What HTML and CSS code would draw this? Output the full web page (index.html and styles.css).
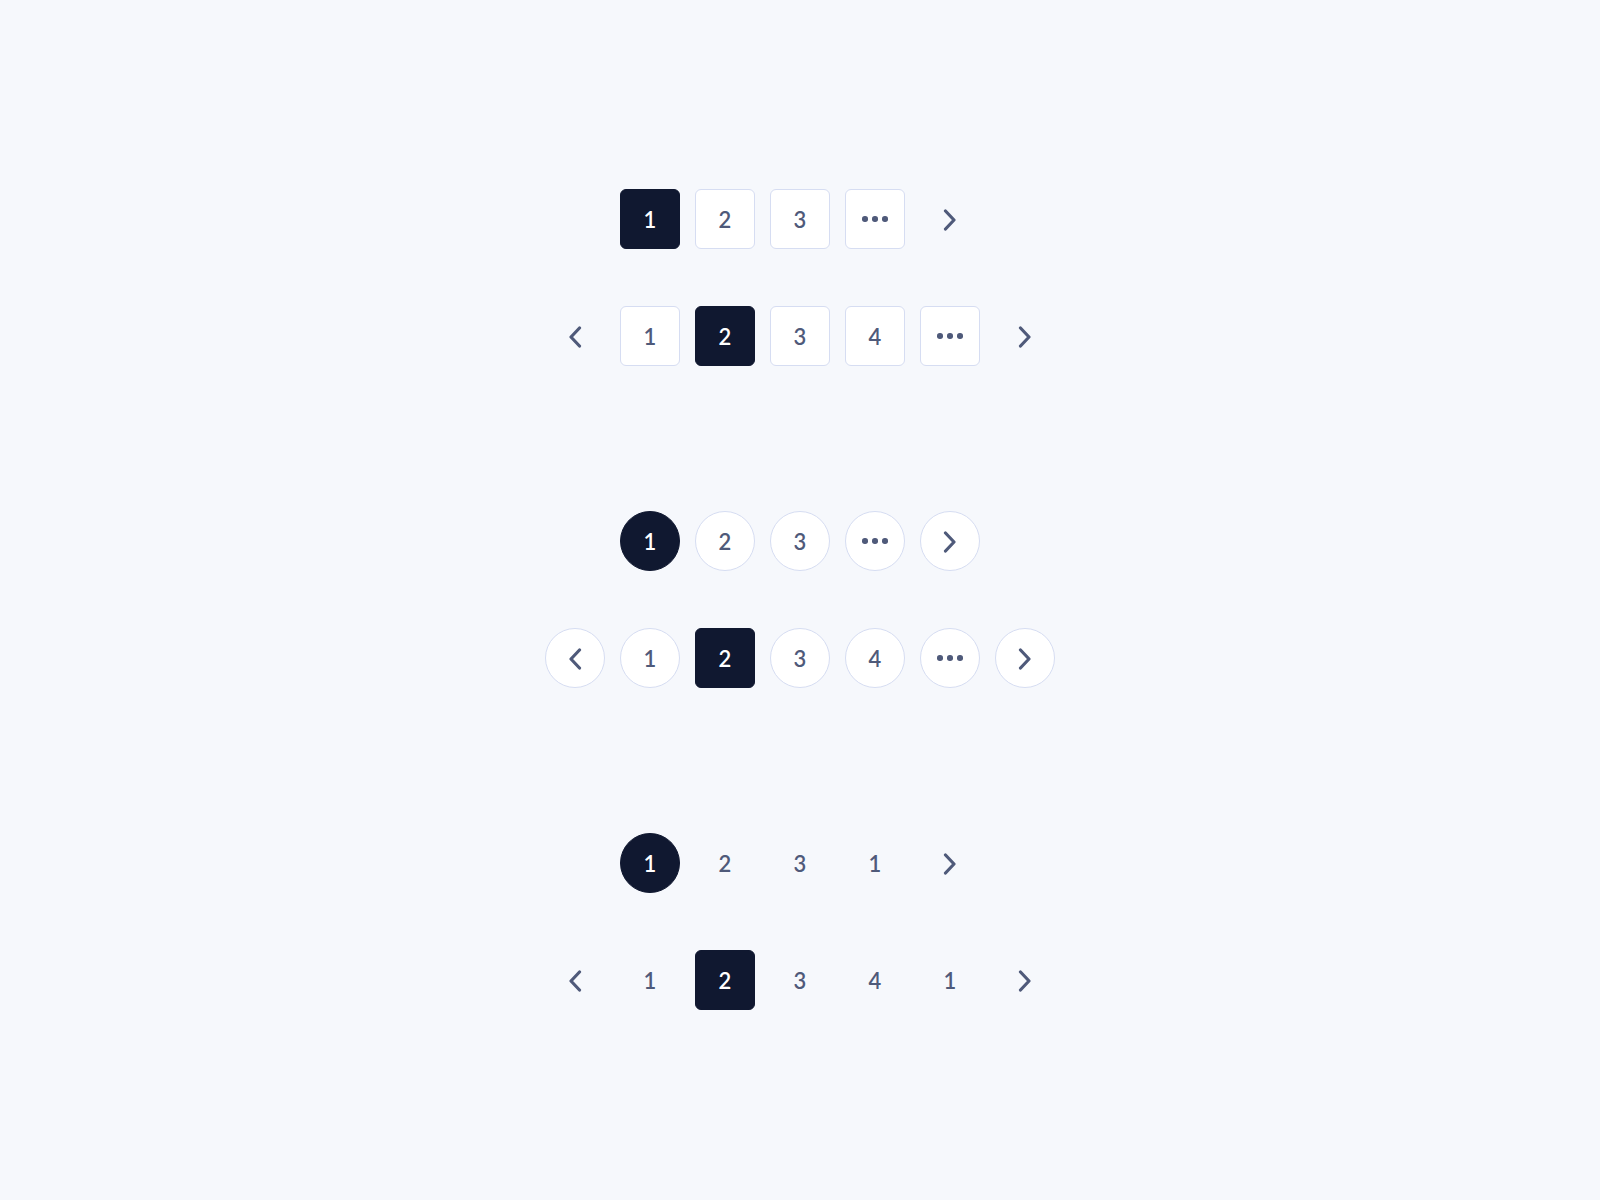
FILE: index.html
```html
<!DOCTYPE html>
<html lang="en">
<head>
<meta charset="utf-8">
<title>Pagination</title>
<link rel="stylesheet" href="styles.css">
</head>
<body>
<main class="page">
  <section class="group">
    <nav class="pager">
      <span class="item boxed active">1</span>
      <span class="item boxed">2</span>
      <span class="item boxed">3</span>
      <span class="item boxed"><span class="dots"><i></i><i></i><i></i></span></span>
      <span class="item"><svg class="chev" viewBox="0 0 14 22"><polyline points="2.5,2 11,11 2.5,20"/></svg></span>
    </nav>
    <nav class="pager">
      <span class="item"><svg class="chev" viewBox="0 0 14 22"><polyline points="11.5,2 3,11 11.5,20"/></svg></span>
      <span class="item boxed">1</span>
      <span class="item boxed active">2</span>
      <span class="item boxed">3</span>
      <span class="item boxed">4</span>
      <span class="item boxed"><span class="dots"><i></i><i></i><i></i></span></span>
      <span class="item"><svg class="chev" viewBox="0 0 14 22"><polyline points="2.5,2 11,11 2.5,20"/></svg></span>
    </nav>
  </section>

  <section class="group">
    <nav class="pager">
      <span class="item boxed round active">1</span>
      <span class="item boxed round">2</span>
      <span class="item boxed round">3</span>
      <span class="item boxed round"><span class="dots"><i></i><i></i><i></i></span></span>
      <span class="item boxed round"><svg class="chev" viewBox="0 0 14 22"><polyline points="2.5,2 11,11 2.5,20"/></svg></span>
    </nav>
    <nav class="pager">
      <span class="item boxed round"><svg class="chev" viewBox="0 0 14 22"><polyline points="11.5,2 3,11 11.5,20"/></svg></span>
      <span class="item boxed round">1</span>
      <span class="item boxed active">2</span>
      <span class="item boxed round">3</span>
      <span class="item boxed round">4</span>
      <span class="item boxed round"><span class="dots"><i></i><i></i><i></i></span></span>
      <span class="item boxed round"><svg class="chev" viewBox="0 0 14 22"><polyline points="2.5,2 11,11 2.5,20"/></svg></span>
    </nav>
  </section>

  <section class="group">
    <nav class="pager">
      <span class="item round active">1</span>
      <span class="item">2</span>
      <span class="item">3</span>
      <span class="item">1</span>
      <span class="item"><svg class="chev" viewBox="0 0 14 22"><polyline points="2.5,2 11,11 2.5,20"/></svg></span>
    </nav>
    <nav class="pager">
      <span class="item"><svg class="chev" viewBox="0 0 14 22"><polyline points="11.5,2 3,11 11.5,20"/></svg></span>
      <span class="item">1</span>
      <span class="item active">2</span>
      <span class="item">3</span>
      <span class="item">4</span>
      <span class="item">1</span>
      <span class="item"><svg class="chev" viewBox="0 0 14 22"><polyline points="2.5,2 11,11 2.5,20"/></svg></span>
    </nav>
  </section>
</main>
</body>
</html>
```

FILE: styles.css
```css
html, body {
  margin: 0;
  padding: 0;
}

body {
  background: #f6f8fc;
  font-family: Lato, "Open Sans", "Liberation Sans", sans-serif;
}

.page {
  box-sizing: border-box;
  height: 1200px;
  padding-bottom: 2px;
  display: flex;
  flex-direction: column;
  align-items: center;
  justify-content: center;
  gap: 145px;
}

.group {
  display: flex;
  flex-direction: column;
  align-items: center;
  gap: 57px;
}

.pager {
  display: flex;
  gap: 15px;
}

.item {
  box-sizing: border-box;
  width: 60px;
  height: 60px;
  display: flex;
  align-items: center;
  justify-content: center;
  padding-top: 3px;
  font-size: 22px;
  font-weight: 600;
  color: #4f5a7a;
  border-radius: 6px;
  line-height: 1;
}

.item.boxed {
  background: #ffffff;
  border: 1px solid #d6ddf2;
}

.item.round {
  border-radius: 50%;
}

.item.active {
  background: #101830;
  border: 1px solid #101830;
  color: #ffffff;
}

.chev {
  width: 14px;
  height: 22px;
  margin-top: -1px;
  fill: none;
  stroke: #4f5a7a;
  stroke-width: 3.2;
  stroke-linecap: round;
  stroke-linejoin: round;
}

.dots {
  display: flex;
  gap: 4.5px;
  margin-top: -2px;
}

.dots i {
  display: block;
  width: 5.5px;
  height: 5.5px;
  border-radius: 50%;
  background: #4f5a7a;
}
```
